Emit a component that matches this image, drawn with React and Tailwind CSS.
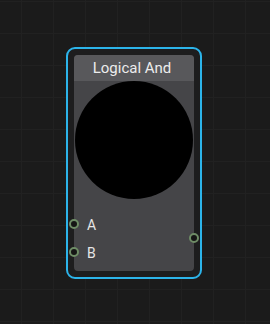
import React from 'react'

function Port({ className }) {
  return (
    <span
      className={`absolute h-[10px] w-[10px] rounded-full border-2 border-[#6e8c66] bg-[#151515] ${className}`}
    />
  )
}

export default function App() {
  const inputs = ['A', 'B']

  return (
    <div className="relative h-[324px] w-[270px] overflow-hidden bg-[#1b1b1b] bg-[linear-gradient(to_right,#212121_1px,transparent_1px),linear-gradient(to_bottom,#212121_1px,transparent_1px)] bg-[size:32px_32px] bg-[position:21px_33px] font-['Roboto',sans-serif]">
      {/* Node on the canvas */}
      <div className="absolute left-[66px] top-[47px] h-[232px] w-[136px] rounded-[9px] border-2 border-[#2cb4ea] bg-[#1d1d1e] p-[6px]">
        <div className="relative flex h-full flex-col rounded-[4px] bg-[#454548]">
          {/* Header */}
          <div className="flex h-[26px] items-center justify-center rounded-t-[4px] bg-[#58585b] pr-[4px] text-[15px] text-[#ececec]">
            Logical And
          </div>

          {/* Preview */}
          <div className="flex justify-center">
            <div className="h-[118px] w-[118px] rounded-full bg-black" />
          </div>

          {/* Inputs */}
          <div className="mt-[12px] flex flex-col">
            {inputs.map((name) => (
              <div key={name} className="flex h-[28px] items-center pl-[13px] text-[14px] text-[#e6e6e6]">
                {name}
              </div>
            ))}
          </div>

          <Port className="left-[-5px] top-[164px]" />
          <Port className="left-[-5px] top-[192px]" />
          <Port className="right-[-5px] top-[178px]" />
        </div>
      </div>
    </div>
  )
}
